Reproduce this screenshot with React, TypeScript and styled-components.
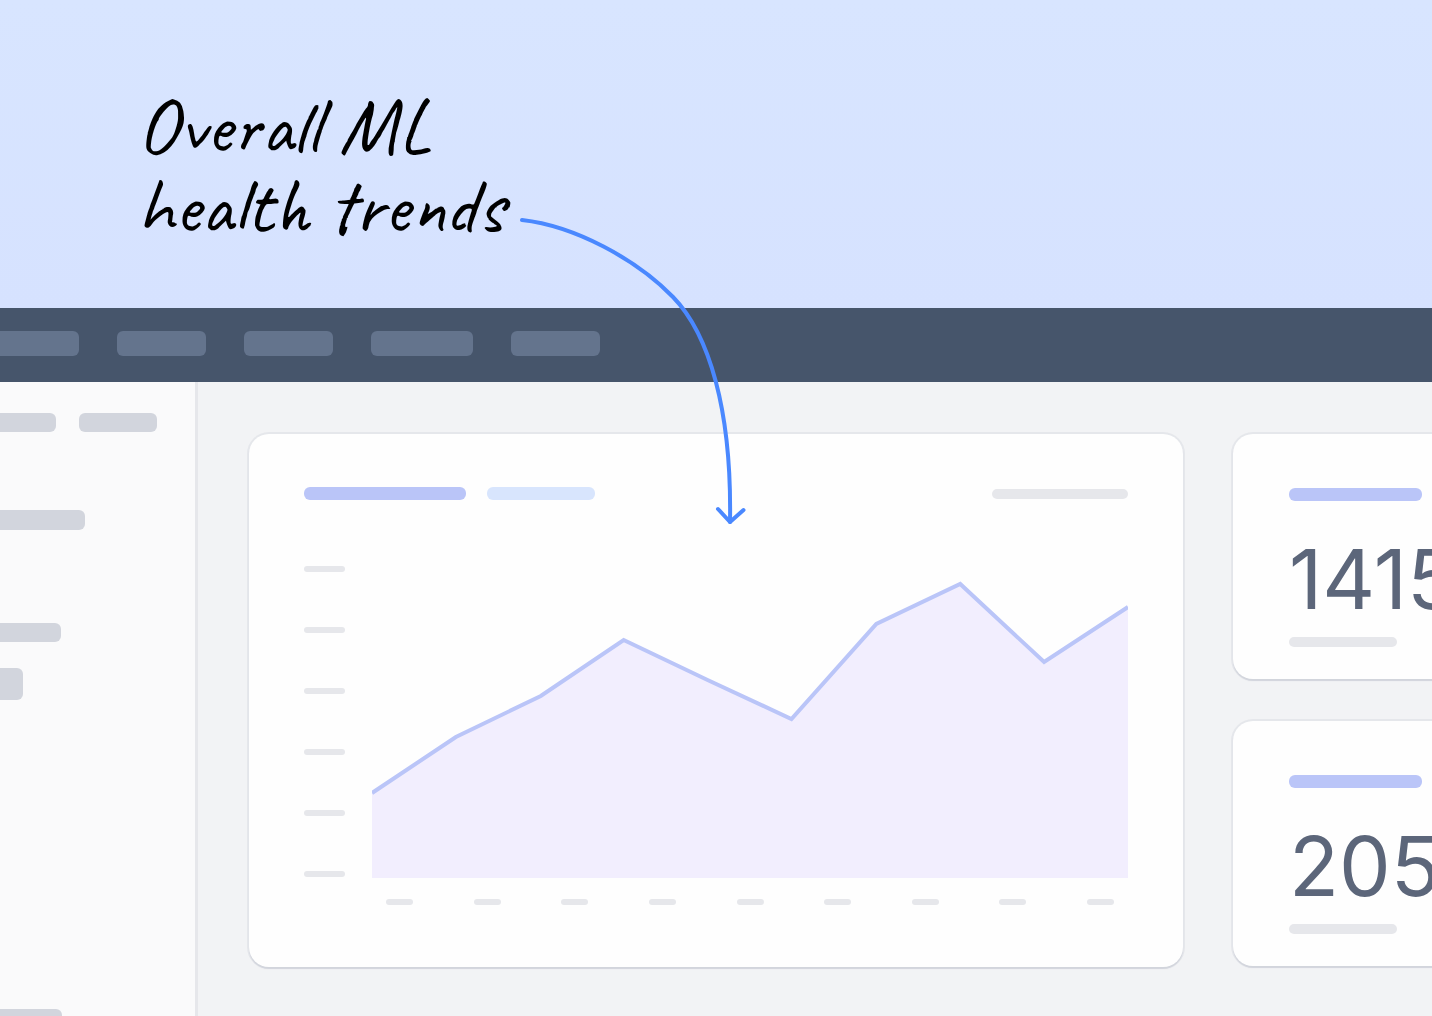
import React from "react";
import styled, { createGlobalStyle } from "styled-components";

const GlobalStyle = createGlobalStyle`
  *, *::before, *::after { box-sizing: border-box; }
  body { margin: 0; background: #f2f3f5; }
`;

const color = {
  slate: "#46556b",
  slateLight: "#64748d",
  grey: "#d2d5dd",
  greyLight: "#e6e7eb",
  periwinkle: "#bac5f8",
  sky: "#d8e5fd",
  lilac: "#f2eefe",
  arrow: "#4a88ff",
};

const Page = styled.div`
  display: flex;
  flex-direction: column;
  height: 100vh;
  overflow: hidden;
`;

const Hero = styled.header`
  position: relative;
  z-index: 1;
  flex: none;
  padding: 86px 137px 62px;
  background: linear-gradient(#d8e5ff, #d6e2ff);
`;

const Title = styled.h1`
  max-width: 400px;
  margin: 0;
  color: #000;
  font-family: Caveat, Lato, sans-serif;
  font-size: 80px;
  font-weight: 500;
  line-height: 80px;
`;

const Pointer = styled.svg`
  position: absolute;
  top: 210px;
  left: 512px;
  width: 240px;
  height: 320px;
  pointer-events: none;
`;

const Bar = styled.span<{ $w: number; $h: number; $r?: number; $tone: string; $cut?: boolean }>`
  display: block;
  flex: none;
  width: ${(p) => p.$w}px;
  height: ${(p) => p.$h}px;
  border-radius: ${(p) => p.$r ?? 6}px;
  ${(p) => p.$cut && "border-top-left-radius: 0; border-bottom-left-radius: 0;"}
  background: ${(p) => p.$tone};
`;

const NavBar = styled.nav`
  display: flex;
  flex: none;
  align-items: center;
  gap: 38px;
  height: 74px;
  padding-bottom: 3px;
  background: ${color.slate};
`;

const Body = styled.div`
  display: flex;
  flex: 1;
  min-height: 0;
`;

const Sidebar = styled.aside`
  display: flex;
  flex: none;
  flex-direction: column;
  width: 198px;
  padding-top: 31px;
  overflow: hidden;
  background: #fafafb;
  border-right: 3px solid ${color.greyLight};
`;

const SideRow = styled.div<{ $after: number }>`
  display: flex;
  flex: none;
  gap: 23px;
  margin-bottom: ${(p) => p.$after}px;
`;

const Dashboard = styled.main`
  display: grid;
  flex: 1;
  grid-template-columns: minmax(0, 1fr) 199px;
  gap: 50px;
  align-items: start;
  padding: 52px 0 48px 51px;
`;

const Card = styled.section`
  background: #fefefe;
  border-radius: 20px;
  box-shadow: 0 0 0 2px rgba(210, 213, 221, 0.4), 0 2px 1px ${color.grey};
`;

const ChartCard = styled(Card)`
  display: flex;
  flex-direction: column;
  padding: 53px 55px 62px;
`;

const CardHeader = styled.div`
  display: flex;
  align-items: center;
  gap: 21px;
  margin-bottom: 66px;
`;

const Spacer = styled.span`
  flex: 1;
`;

const Plot = styled.div`
  display: grid;
  grid-template-columns: 41px minmax(0, 1fr);
  column-gap: 27px;
  row-gap: 21px;
`;

const YAxis = styled.div`
  display: flex;
  flex-direction: column;
  justify-content: space-between;
  height: 311px;
`;

const XAxis = styled.div`
  display: flex;
  grid-column: 2;
  justify-content: space-between;
  padding: 0 14px;
`;

const AreaChart = styled.svg`
  display: block;
  width: 100%;
  height: 312px;
`;

const Stats = styled.div`
  display: grid;
  gap: 42px;
`;

const StatCard = styled(Card)`
  padding: 54px 0 32px 56px;
  border-top-right-radius: 0;
  border-bottom-right-radius: 0;
`;

const StatValue = styled.p`
  margin: 29px 0 7px;
  overflow: hidden;
  color: #5c667a;
  font-family: Inter, sans-serif;
  font-optical-sizing: none;
  font-size: 82px;
  line-height: 100px;
  white-space: nowrap;
`;

const navItems = [79, 89, 89, 102, 89];

const sideRows = [
  { bars: [56, 78], height: 19, after: 78 },
  { bars: [85], height: 20, after: 93 },
  { bars: [61], height: 19, after: 26 },
  { bars: [23], height: 32, after: 309 },
  { bars: [62], height: 19, after: 0 },
];

const trend = [
  [0, 227], [84, 171], [169, 130], [252, 74], [336, 114],
  [420, 153], [505, 58], [589, 18], [673, 96], [757, 41],
];
const line = trend.map((p) => p.join(",")).join(" ");

function TrendChart() {
  return (
    <AreaChart viewBox="0 0 757 312" preserveAspectRatio="none" role="img" aria-label="ML health trend">
      <polygon points={`0,312 ${line} 757,312`} fill={color.lilac} />
      <polyline
        points={line}
        fill="none"
        stroke={color.periwinkle}
        strokeWidth="4"
        vectorEffect="non-scaling-stroke"
      />
    </AreaChart>
  );
}

function Stat({ value }: { value: string }) {
  return (
    <StatCard>
      <Bar $w={133} $h={13} $tone={color.periwinkle} />
      <StatValue>{value}</StatValue>
      <Bar $w={108} $h={10} $tone={color.greyLight} />
    </StatCard>
  );
}

export default function App() {
  return (
    <>
      <GlobalStyle />
      <Page>
        <Hero>
          <Title>Overall ML health trends</Title>
          <Pointer viewBox="512 210 240 320" aria-hidden="true">
            <g fill="none" stroke={color.arrow} strokeWidth="4" strokeLinecap="round" strokeLinejoin="round">
              <path d="M522 220C575 226 636 259 673 297C709 334 732 410 730 522" />
              <path d="M718 509L730 522L743.500 510" />
            </g>
          </Pointer>
        </Hero>
        <NavBar>
          {navItems.map((w, i) => (
            <Bar key={i} $w={w} $h={25} $tone={color.slateLight} $cut={i === 0} />
          ))}
        </NavBar>
        <Body>
          <Sidebar>
            {sideRows.map((row, i) => (
              <SideRow key={i} $after={row.after}>
                {row.bars.map((w, j) => (
                  <Bar key={j} $w={w} $h={row.height} $tone={color.grey} $cut={j === 0} />
                ))}
              </SideRow>
            ))}
          </Sidebar>
          <Dashboard>
            <ChartCard>
              <CardHeader>
                <Bar $w={162} $h={13} $tone={color.periwinkle} />
                <Bar $w={108} $h={13} $tone={color.sky} />
                <Spacer />
                <Bar $w={136} $h={10} $tone={color.greyLight} />
              </CardHeader>
              <Plot>
                <YAxis>
                  {Array.from({ length: 6 }, (_, i) => (
                    <Bar key={i} $w={41} $h={6} $r={3} $tone={color.greyLight} />
                  ))}
                </YAxis>
                <TrendChart />
                <XAxis>
                  {Array.from({ length: 9 }, (_, i) => (
                    <Bar key={i} $w={27} $h={6} $r={3} $tone={color.greyLight} />
                  ))}
                </XAxis>
              </Plot>
            </ChartCard>
            <Stats>
              <Stat value="1415" />
              <Stat value="205" />
            </Stats>
          </Dashboard>
        </Body>
      </Page>
    </>
  );
}
